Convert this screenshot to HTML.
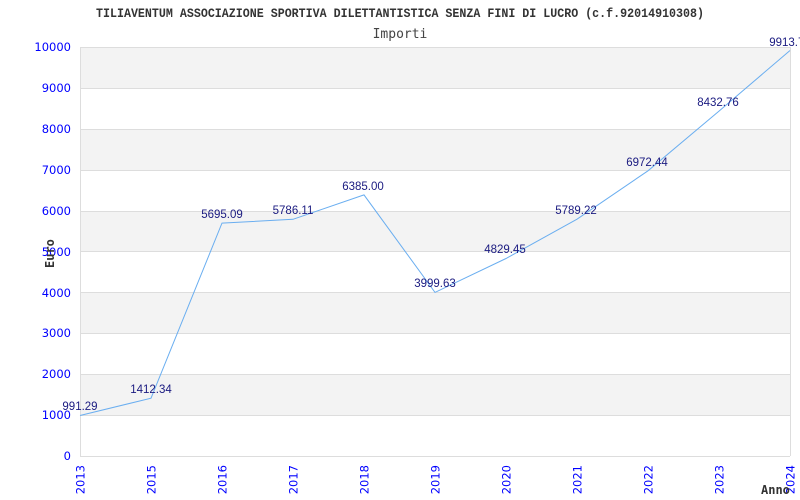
<!DOCTYPE html>
<html><head><meta charset="utf-8"><style>html,body{margin:0;padding:0;background:#fff}svg{display:block}</style></head>
<body>
<svg width="800" height="500" xmlns="http://www.w3.org/2000/svg">
<rect width="800" height="500" fill="#fff"/>
<text x="400" y="17" text-anchor="middle" font-family="Liberation Mono, monospace" font-weight="bold" font-size="12.8" fill="#333" textLength="608" lengthAdjust="spacingAndGlyphs">TILIAVENTUM ASSOCIAZIONE SPORTIVA DILETTANTISTICA SENZA FINI DI LUCRO (c.f.92014910308)</text>
<text x="400" y="38" text-anchor="middle" font-family="DejaVu Sans Mono, monospace" font-size="13" fill="#444">Importi</text>
<g fill="#f3f3f3">
<rect x="80" y="47" width="710" height="41"/>
<rect x="80" y="129" width="710" height="41"/>
<rect x="80" y="211" width="710" height="41"/>
<rect x="80" y="292" width="710" height="41"/>
<rect x="80" y="374" width="710" height="41"/>
</g>
<g stroke="#ddd" stroke-width="1">
<line x1="80" y1="47.5" x2="790" y2="47.5"/>
<line x1="80" y1="88.5" x2="790" y2="88.5"/>
<line x1="80" y1="129.5" x2="790" y2="129.5"/>
<line x1="80" y1="170.5" x2="790" y2="170.5"/>
<line x1="80" y1="211.5" x2="790" y2="211.5"/>
<line x1="80" y1="251.5" x2="790" y2="251.5"/>
<line x1="80" y1="292.5" x2="790" y2="292.5"/>
<line x1="80" y1="333.5" x2="790" y2="333.5"/>
<line x1="80" y1="374.5" x2="790" y2="374.5"/>
<line x1="80" y1="415.5" x2="790" y2="415.5"/>
<line x1="80" y1="456.5" x2="790" y2="456.5"/>
<line x1="80.5" y1="47" x2="80.5" y2="456"/>
<line x1="790.5" y1="47" x2="790.5" y2="456"/>
</g>
<g font-family="DejaVu Sans, sans-serif" font-size="11.5" fill="#0000ff" text-anchor="end">
<text x="71" y="51">10000</text>
<text x="71" y="92">9000</text>
<text x="71" y="133">8000</text>
<text x="71" y="174">7000</text>
<text x="71" y="215">6000</text>
<text x="71" y="256">5000</text>
<text x="71" y="297">4000</text>
<text x="71" y="337">3000</text>
<text x="71" y="378">2000</text>
<text x="71" y="419">1000</text>
<text x="71" y="460">0</text>
</g>
<g font-family="DejaVu Sans, sans-serif" font-size="11.5" fill="#0000ff" text-anchor="end">
<text transform="translate(84.5,465) rotate(-90)">2013</text>
<text transform="translate(155.5,465) rotate(-90)">2015</text>
<text transform="translate(226.5,465) rotate(-90)">2016</text>
<text transform="translate(297.5,465) rotate(-90)">2017</text>
<text transform="translate(368.5,465) rotate(-90)">2018</text>
<text transform="translate(439.5,465) rotate(-90)">2019</text>
<text transform="translate(510.5,465) rotate(-90)">2020</text>
<text transform="translate(581.5,465) rotate(-90)">2021</text>
<text transform="translate(652.5,465) rotate(-90)">2022</text>
<text transform="translate(723.5,465) rotate(-90)">2023</text>
<text transform="translate(794.5,465) rotate(-90)">2024</text>
</g>
<text transform="translate(54,268) rotate(-90)" font-family="DejaVu Sans Mono, monospace" font-weight="bold" font-size="12" fill="#333">Euro</text>
<text x="761" y="494" font-family="DejaVu Sans Mono, monospace" font-weight="bold" font-size="12" fill="#333">Anno</text>
<polyline fill="none" stroke="#6aaef0" stroke-width="1" points="80,415.5 151,398.2 222,223.1 293,219.3 364,194.9 435,292.4 506,258.5 577,219.2 648,170.8 719,111.1 790,50.5"/>
<g font-family="Liberation Sans, sans-serif" font-size="11.5" fill="#1a1a80" text-anchor="middle">
<text x="80" y="410">991.29</text>
<text x="151" y="393">1412.34</text>
<text x="222" y="218">5695.09</text>
<text x="293" y="214">5786.11</text>
<text x="363" y="190">6385.00</text>
<text x="435" y="287">3999.63</text>
<text x="505" y="253">4829.45</text>
<text x="576" y="214">5789.22</text>
<text x="647" y="166">6972.44</text>
<text x="718" y="106">8432.76</text>
<text x="790" y="46">9913.70</text>
</g>
</svg>
</body></html>
